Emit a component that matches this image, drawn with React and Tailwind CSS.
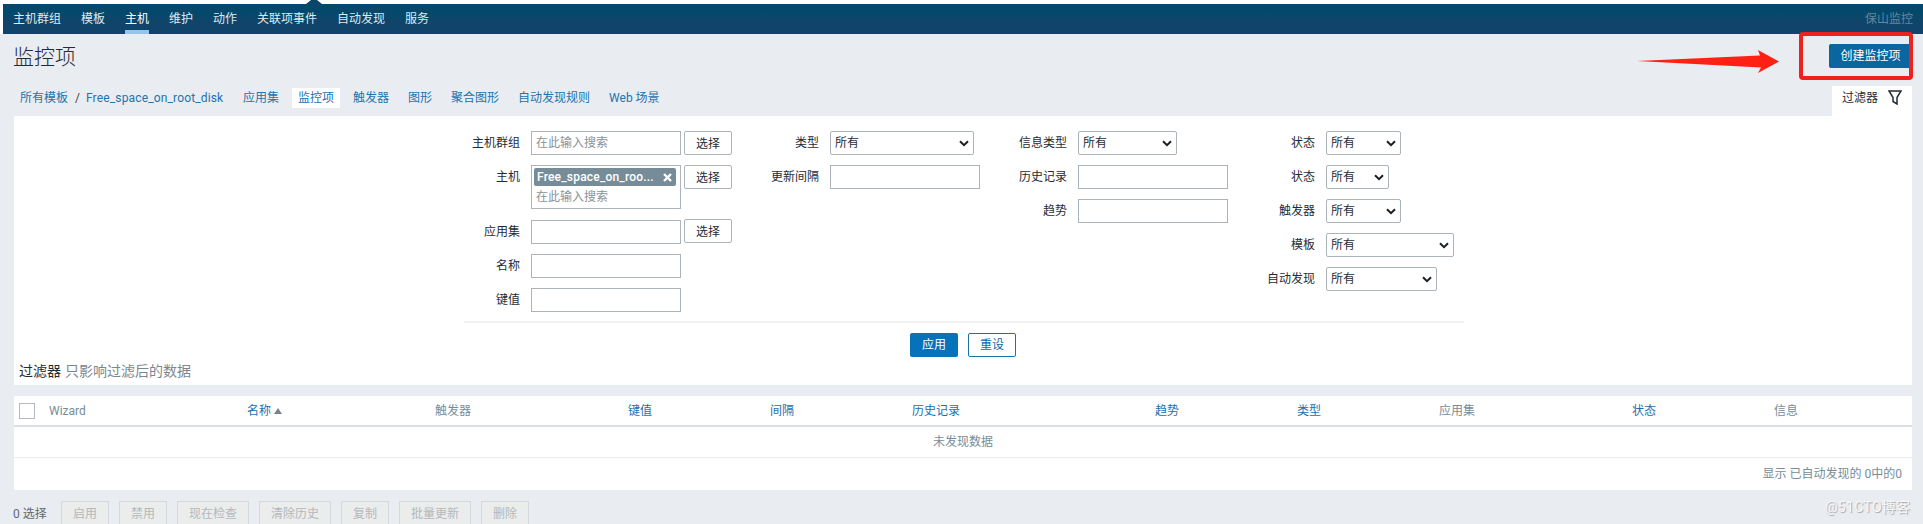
const NAV = ['主机群组', '模板', '主机', '维护', '动作', '关联项事件', '自动发现', '服务'];
const TABS = ['应用集', '监控项', '触发器', '图形', '聚合图形', '自动发现规则', 'Web 场景'];
const COLUMNS = [
  ['Wizard', 'w-[198px]'],
  ['名称', 'w-[188px]', true],
  ['触发器', 'w-[193px]'],
  ['键值', 'w-[142px]', true],
  ['间隔', 'w-[142px]', true],
  ['历史记录', 'w-[243px]', true],
  ['趋势', 'w-[142px]', true],
  ['类型', 'w-[142px]', true],
  ['应用集', 'w-[193px]'],
  ['状态', 'w-[142px]', true],
  ['信息', 'w-[130px]'],
];
const ACTIONS = [
  ['启用', 'w-[48px]'],
  ['禁用', 'w-[48px]'],
  ['现在检查', 'w-[72px]'],
  ['清除历史', 'w-[72px]'],
  ['复制', 'w-[48px]'],
  ['批量更新', 'w-[72px]'],
  ['删除', 'w-[48px]'],
];

function Row({ label, tall, children }) {
  return (
    <div className={tall ? 'flex h-[44px] items-start' : 'flex h-[24px] items-start'}>
      <div className="mr-[11px] flex-1 text-right leading-[25px]">{label}</div>
      {children}
    </div>
  );
}

function Input({ placeholder }) {
  return (
    <div className="h-[24px] w-[150px] border border-[#acb4b9] bg-white pl-[4px] leading-[23px] text-[#8a9299]">
      {placeholder}
    </div>
  );
}

function Select({ width }) {
  return (
    <div className={`flex h-[24px] items-center justify-between rounded-[2px] border border-[#acb4b9] bg-white pl-[4px] pr-[4px] ${width}`}>
      <span>所有</span>
      <svg width="10" height="7" viewBox="0 0 10 7" fill="none" stroke="#1a1f24" strokeWidth="2">
        <path d="M1 1.3 5 5.2 9 1.3" />
      </svg>
    </div>
  );
}

function Choose({ raised }) {
  return (
    <div className={`ml-[3px] h-[24px] w-[48px] rounded-[2px] border border-[#acb4b9] bg-white text-center leading-[24px] ${raised ? '-mt-px' : ''}`}>
      选择
    </div>
  );
}

export default function App() {
  return (
    <div className="relative h-[524px] w-[1923px] overflow-hidden bg-[#e9ecf1] font-[Roboto,'Noto_Sans_CJK_SC',sans-serif] text-[12px] leading-[16px] text-[#1f2c33]">
      <div className="h-[4px] bg-white" />
      <div className="bg-white pl-[3px]">
        <nav className="flex h-[30px] justify-between bg-linear-to-b from-[#04496b] from-30% to-[#10446a] to-60% pl-[10px] pr-[10px] leading-[30px] text-[#dfeaf2]">
          <div className="flex gap-[20px]">
            {NAV.map((n, i) => (
              <span key={n} className={i === 2 ? 'h-[30px] border-b-4 border-[#8fc8ea] text-white' : ''}>{n}</span>
            ))}
          </div>
          <span className="text-[#62879f]">保山监控</span>
        </nav>
      </div>
      <svg className="absolute left-[306px] top-0" width="16" height="5" viewBox="0 0 16 5">
        <path d="M0 5V4L5 0H11L16 4V5Z" fill="#0b466a" />
      </svg>

      <div className="flex h-[44px] items-start justify-between pl-[13px] pr-[11px]">
        <h1 className="mt-[10px] text-[21px] font-light leading-[26px]">监控项</h1>
        <div className="mt-[10px] h-[24px] w-[83px] rounded-[2px] bg-[#0b66a0] text-center leading-[25px] text-white">创建监控项</div>
      </div>

      <div className="flex h-[38px] items-end justify-between pl-[20px] pr-[11px]">
        <div className="mb-[8px] flex h-[20px] items-center text-[#2174ae]">
          <span>所有模板</span>
          <span className="ml-[7px] mr-[6px] text-[#444]">/</span>
          <span className="w-[151px] tracking-[0.15px]">Free_space_on_root_disk</span>
          <div className="flex gap-[7px]">
            {TABS.map((t, i) => (
              <span key={t} className={i === 1 ? 'bg-white px-[6px] leading-[20px]' : 'px-[6px] leading-[20px]'}>{t}</span>
            ))}
          </div>
        </div>
        <div className="flex h-[30px] w-[80px] items-start bg-white pl-[10px] pt-[4px]">
          <span>过滤器</span>
          <svg className="ml-[10px]" width="14" height="15" viewBox="0 0 14 15" fill="none" stroke="#1f2c33" strokeWidth="1.5">
            <path d="M1 1H13L9 7.5V14L5 11.5V7.5Z" />
          </svg>
        </div>
      </div>

      <div className="mx-[14px] mr-[11px] h-[269px] bg-white">
        <div className="ml-[450px] flex h-[207px] w-[1000px] border-b-2 border-[#f0f1f2] pt-[15px]">
          <div className="flex w-[268px] flex-col gap-[10px]">
            <Row label="主机群组"><Input placeholder="在此输入搜索" /><Choose /></Row>
            <Row label="主机" tall>
              <div className="h-[44px] w-[150px] border border-[#acb4b9] pl-[2px] pt-[2px]">
                <div className="flex h-[18px] w-[142px] items-center justify-between rounded-[2px] bg-[#768d99] pl-[3px] pr-[4px] font-medium tracking-[0.2px] text-white">
                  <span>Free_space_on_roo...</span>
                  <svg width="9" height="9" viewBox="0 0 9 9" stroke="white" strokeWidth="2.4"><path d="M1 1 8 8M8 1 1 8" /></svg>
                </div>
                <div className="pl-[2px] leading-[23px] text-[#8a9299]">在此输入搜索</div>
              </div>
              <Choose />
            </Row>
            <div className="pt-px"><Row label="应用集"><Input /><Choose raised /></Row></div>
            <Row label="名称"><Input /><div className="w-[51px]" /></Row>
            <Row label="键值"><Input /><div className="w-[51px]" /></Row>
          </div>
          <div className="flex w-[248px] flex-col gap-[10px]">
            <Row label="类型"><div className="w-[150px]"><Select width="w-[144px]" /></div></Row>
            <Row label="更新间隔"><Input /></Row>
          </div>
          <div className="flex w-[248px] flex-col gap-[10px]">
            <Row label="信息类型"><div className="w-[150px]"><Select width="w-[99px]" /></div></Row>
            <Row label="历史记录"><Input /></Row>
            <Row label="趋势"><Input /></Row>
          </div>
          <div className="flex w-[236px] flex-col gap-[10px]">
            {[['状态', 'w-[75px]'], ['状态', 'w-[63px]'], ['触发器', 'w-[75px]'], ['模板', 'w-[128px]'], ['自动发现', 'w-[111px]']].map(([l, w], i) => (
              <Row key={i} label={l}><div className="w-[138px]"><Select width={w} /></div></Row>
            ))}
          </div>
        </div>
        <div className="flex justify-center gap-[10px] pt-[10px] text-center">
          <div className="h-[24px] w-[48px] rounded-[2px] bg-[#0572ba] leading-[25px] text-white">应用</div>
          <div className="h-[24px] w-[48px] rounded-[2px] border border-[#1f6fa8] leading-[23px] text-[#0b66a8]">重设</div>
        </div>
        <div className="flex gap-[4px] pl-[5px] pt-[4px] text-[14px] leading-[20px]">
          <span>过滤器</span>
          <span className="text-[#7b8790]">只影响过滤后的数据</span>
        </div>
      </div>

      <div className="ml-[14px] mr-[11px] mt-[11px] h-[94px] bg-white text-[#768d99]">
        <div className="flex h-[31px] items-center border-b-2 border-[#dcdfe1] pl-[5px]">
          <div className="mr-[14px] h-[16px] w-[16px] shrink-0 border border-[#b4bbc0]" />
          {COLUMNS.map(([name, width, link]) => (
            <div key={name} className={`shrink-0 ${width}`}>
              <span className={link ? 'text-[#1b6fae]' : ''}>{name}</span>
              {name === '名称' && (
                <svg className="ml-[3px] inline-block" width="8" height="6" viewBox="0 0 8 6"><path d="M0 6 4 0 8 6Z" fill="#7a8288" /></svg>
              )}
            </div>
          ))}
        </div>
        <div className="h-[31px] border-b border-[#ebeef0] text-center leading-[31px]">未发现数据</div>
        <div className="pr-[10px] text-right leading-[32px]">显示 已自动发现的 0中的0</div>
      </div>

      <div className="flex h-[34px] gap-[10px] pl-[13px] pt-[11px]">
        <span className="w-[38px] whitespace-nowrap leading-[26px] text-[#5d6a73]">0 选择</span>
        {ACTIONS.map(([name, width]) => (
          <div key={name} className={`h-[26px] border border-[#d5d8da] bg-[#ebecec] text-center leading-[25px] text-[#b3b8bb] ${width}`}>{name}</div>
        ))}
      </div>

      <svg className="absolute left-[1637px] top-[49px]" width="144" height="26" viewBox="0 0 144 26">
        <path d="M0 12 123 6.5 121 1 142 12.5 121 24 124 18.5Z" fill="#ff2113" />
      </svg>
      <div className="absolute left-[1799px] top-[32px] h-[48px] w-[114px] rounded-[4px] border-4 border-[#ee221d]" />
      <div className="absolute left-[1825px] top-[498px] whitespace-nowrap text-[14px] leading-[18px] tracking-[0.3px] text-[#f6f7f8] [text-shadow:1px_1px_1px_#a4a7aa]">@51CTO博客</div>
    </div>
  );
}
